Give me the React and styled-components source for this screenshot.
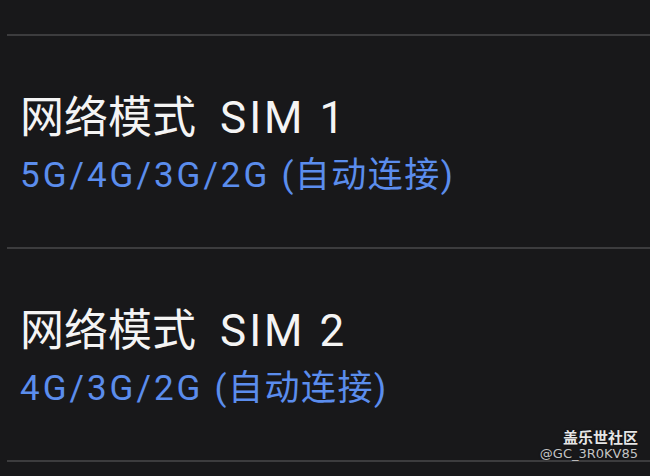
import React from "react";
import styled, { createGlobalStyle } from "styled-components";

const Global = createGlobalStyle`
  html, body { margin: 0; padding: 0; background: #18181a; }
  body { width: 650px; height: 476px; overflow: hidden; font-family: Roboto, "Noto Sans CJK SC", sans-serif; }
`;

const Page = styled.div`
  position: relative;
  width: 650px;
  height: 476px;
  background: #18181a;
  padding-top: 34px;
  box-sizing: border-box;
`;

const Item = styled.div`
  margin-left: 7px;
  border-top: 2px solid #3c3c3e;
  height: 213px;
  box-sizing: border-box;
  padding: 56px 0 0 13px;
  display: flex;
  flex-direction: column;
  gap: 10px;
`;

const Bottom = styled.div`
  margin-left: 7px;
  border-top: 2px solid #3c3c3e;
`;

const Title = styled.div`
  color: #f4f4f4;
  font-size: 44px;
  line-height: 52px;
  white-space: nowrap;
`;

const Sub = styled.div`
  color: #5b8ded;
  font-size: 35px;
  line-height: 44px;
  white-space: nowrap;
`;

const Part = styled.span`
  display: inline-block;
  margin-left: ${(p) => p.$ml || 0}px;
  letter-spacing: ${(p) => p.$ls || 0}px;
`;

const Watermark = styled.div`
  position: absolute;
  right: 12px;
  bottom: 15px;
  display: flex;
  flex-direction: column;
  align-items: flex-end;
  font-family: "Noto Sans CJK SC", "DejaVu Sans", sans-serif;
  color: #e6e6e6;
  text-shadow: 0 0 2px rgba(0, 0, 0, 0.6);
`;

const WmTitle = styled.div`
  font-size: 15px;
  font-weight: 700;
  line-height: 19px;
`;

const WmId = styled.div`
  font-family: "DejaVu Sans", sans-serif;
  font-size: 13px;
  line-height: 15px;
  color: #c4c4c4;
`;

const items = [
  { sim: "SIM 1", modes: "5G/4G/3G/2G" },
  { sim: "SIM 2", modes: "4G/3G/2G" },
];

export default function App() {
  return (
    <>
      <Global />
      <Page>
        {items.map((it) => (
          <Item key={it.sim}>
            <Title>
              网络模式<Part $ml={24} $ls={3}>{it.sim}</Part>
            </Title>
            <Sub>
              <Part $ls={3}>{it.modes}</Part>
              <Part $ml={11} $ls={1.5}>(自动连接)</Part>
            </Sub>
          </Item>
        ))}
        <Bottom />
        <Watermark>
          <WmTitle>盖乐世社区</WmTitle>
          <WmId>@GC_3R0KV85</WmId>
        </Watermark>
      </Page>
    </>
  );
}
